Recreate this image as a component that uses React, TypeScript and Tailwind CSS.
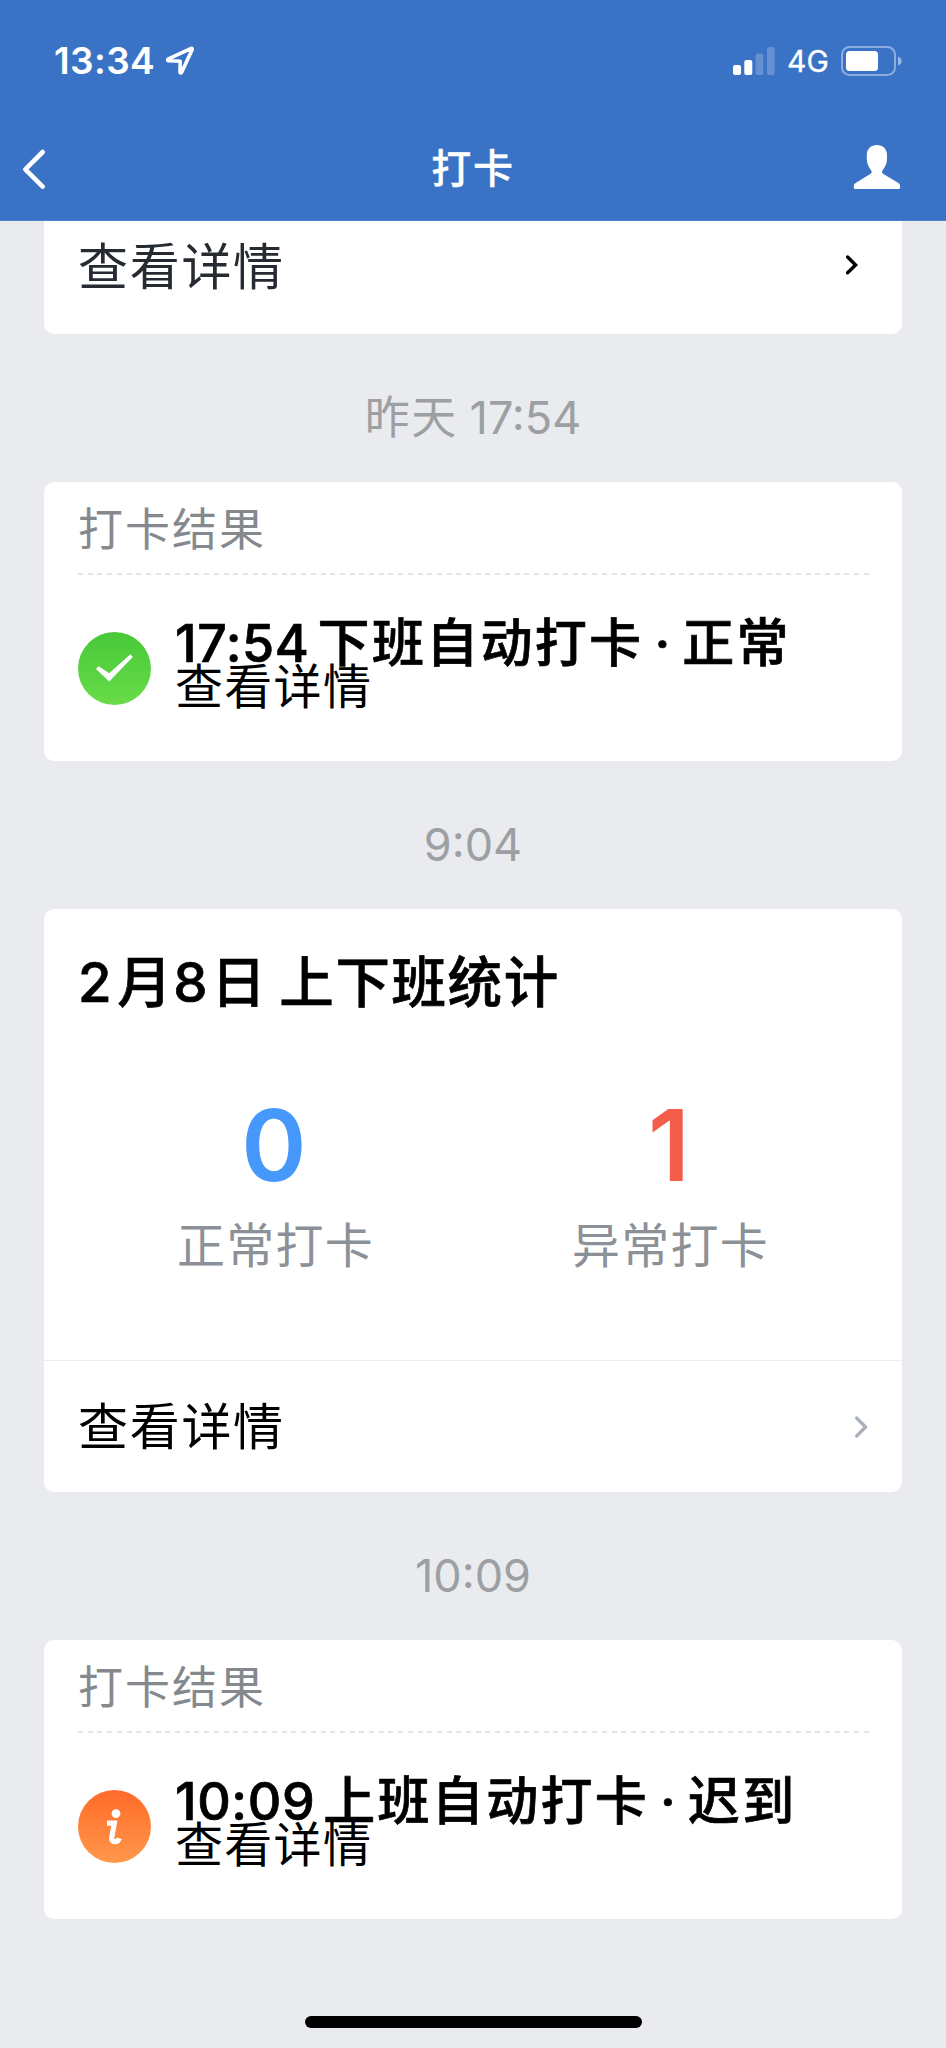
import type { ReactNode } from "react";

function StatusBar() {
  return (
    <div className="flex h-[121px] items-center pl-[54px] pr-[44px]">
      <span className="text-[37px] font-semibold leading-[40px] tracking-[0.4px]">13:34</span>
      <svg className="ml-[9px]" width="32" height="32" viewBox="0 0 32 32" fill="none">
        <path
          d="M27.2 3.4 4 14.2Q3.2 15.4 4.4 15.6L16.2 16.2 16 27.4Q16.8 28.4 17.6 27.4L28.2 4.4Q28.4 3 27.2 3.4Z"
          stroke="white"
          strokeWidth="3.6"
          strokeLinejoin="round"
        />
      </svg>
      <svg className="ml-auto" width="42" height="28" viewBox="0 0 42 28" fill="white">
        <rect x="0" y="18" width="8" height="10" rx="2" />
        <rect x="11.3" y="13" width="8" height="15" rx="2" />
        <rect x="22.6" y="6.6" width="7.6" height="21.4" rx="2" opacity="0.22" />
        <rect x="34" y="0" width="7.6" height="28" rx="2" opacity="0.22" />
      </svg>
      <span className="ml-[12px] w-[42px] text-[30px] font-normal leading-[36px] [-webkit-text-stroke:0.3px_white]">4G</span>
      <svg className="ml-[12px]" width="61" height="30" viewBox="0 0 61 30" fill="none">
        <rect x="1" y="1" width="53" height="28" rx="7.5" stroke="white" strokeOpacity="0.42" strokeWidth="2" />
        <rect x="5" y="5" width="32" height="20" rx="3.5" fill="white" />
        <path d="M57 10.5Q60.6 12 60.6 15T57 19.5Z" fill="white" fillOpacity="0.5" />
      </svg>
    </div>
  );
}

function NavBar() {
  return (
    <div className="grid h-[100px] grid-cols-[1fr_auto_1fr] items-start pl-[20px] pr-[20px]">
      <svg className="mt-[26px]" width="50" height="44" viewBox="0 0 50 44" fill="none">
        <path d="M22.7 5 5.3 22.3 22.7 39.6" stroke="white" strokeWidth="4.6" strokeLinecap="round" strokeLinejoin="round" />
      </svg>
      <h1 className="mt-[23px] text-[40px] font-medium leading-[50px] tracking-[1.8px] [-webkit-text-stroke:0.3px_white]">打卡</h1>
      <svg className="mr-[26px] mt-[23px] justify-self-end" width="50" height="46" viewBox="0 0 50 46" fill="white">
        <path d="M26.8 1C33 1 37 5 37 11V15C37 19.5 35.2 23 32.6 26.3C31.8 27.6 31.8 29 33 29.8L48 38.8C49.5 39.8 50 40.8 50 42V43.8Q50 45 48.8 45H5Q3.8 45 3.8 43.8V42C3.8 40.8 4.5 39.8 6 38.8L20.6 29.8C22 29 22 27.6 21 26.3C18.6 23 16.8 19.5 16.8 15V11C16.8 5 20.8 1 26.8 1Z" />
      </svg>
    </div>
  );
}

function Timestamp({ day, time }: { day?: string; time: string }) {
  return (
    <div className="flex h-[148px] justify-center gap-[12px] pt-[19px] text-[45px] leading-[130px] text-[#9da0a3]">
      {day && <span className="tracking-[1.4px]">{day}</span>}
      <span>{time}</span>
    </div>
  );
}

function CheckIcon() {
  return (
    <svg width="73" height="73" viewBox="0 0 73 73">
      <defs>
        <linearGradient id="green" x1="0" y1="0" x2="0" y2="1">
          <stop offset="0" stopColor="#48c839" />
          <stop offset="1" stopColor="#68dc48" />
        </linearGradient>
      </defs>
      <circle cx="36.5" cy="36.5" r="36.5" fill="url(#green)" />
      <path d="M18 37 20.6 34.2 31.2 41.2 52.4 22.2 54.8 25 31.2 49.6Z" fill="white" />
    </svg>
  );
}

function InfoIcon() {
  return (
    <svg width="73" height="73" viewBox="0 0 73 73" fill="none">
      <defs>
        <linearGradient id="orange" x1="0" y1="0" x2="0" y2="1">
          <stop offset="0" stopColor="#ff6a2a" />
          <stop offset="1" stopColor="#ff984a" />
        </linearGradient>
      </defs>
      <circle cx="36.5" cy="36.5" r="36.5" fill="url(#orange)" />
      <circle cx="38" cy="23.6" r="4.4" fill="white" />
      <path d="M29 33.2H36.4L33.8 47Q33.2 51.6 37 51.6Q40.2 51.6 41.2 48.2" stroke="white" strokeWidth="5.2" />
    </svg>
  );
}

function ResultCard({ icon, time, title, status }: { icon: ReactNode; time: string; title: string; status: string }) {
  return (
    <section className="mx-[44px] h-[279px] shrink-0 rounded-[10px] bg-white px-[34px]">
      <div className="h-[91px] pt-[5px] text-[45px] leading-[86px] tracking-[2px] text-[#85898e]">打卡结果</div>
      <div className="h-[2px] w-[791px] bg-[repeating-linear-gradient(90deg,#e4e4e4_0_5px,transparent_5px_9.7px)]" />
      <div className="flex">
        <div className="mt-[57px] shrink-0">{icon}</div>
        <div className="ml-[24px] mt-[47px] whitespace-nowrap text-black">
          <div className="flex text-[52px] font-medium leading-[44px] [-webkit-text-stroke:0.7px_black]">
            <span className="tracking-[0.6px]">{time}</span>
            <span className="ml-[8px] tracking-[2.3px]">{title}</span>
            <span className="ml-[11px] mr-[12px]">·</span>
            <span className="tracking-[2.3px]">{status}</span>
          </div>
          <div className="text-[48px] leading-[42px] tracking-[1.3px]">查看详情</div>
        </div>
      </div>
    </section>
  );
}

function Stat({ value, label, color }: { value: string; label: string; color: string }) {
  return (
    <div className="w-[395px] text-center">
      <div className={`pr-[3px] text-[99px] font-semibold leading-[120px] ${color}`}>{value}</div>
      <div className="mt-[11px] text-[48px] leading-[60px] tracking-[1.2px] text-[#8c9198]">{label}</div>
    </div>
  );
}

function SummaryCard() {
  return (
    <section className="mx-[44px] h-[583px] shrink-0 rounded-[10px] bg-white">
      <div className="h-[452px] border-b border-[#ededee] px-[34px] pt-[43px]">
        <h2 className="flex whitespace-nowrap text-[54.5px] font-medium leading-[60px] tracking-[1.6px] text-black [-webkit-text-stroke:0.7px_black]">
          <span>2</span>
          <span className="ml-[4px]">月</span>
          <span>8</span>
          <span className="ml-[2px]">日</span>
          <span className="ml-[12px]">上下班统计</span>
        </h2>
        <div className="mt-[73px] flex">
          <Stat value="0" label="正常打卡" color="text-[#4699fb]" />
          <Stat value="1" label="异常打卡" color="text-[#f55d4b]" />
        </div>
      </div>
      <div className="flex h-[131px] items-center justify-between pl-[34px] pr-[33px]">
        <span className="text-[50px] leading-[60px] tracking-[1.7px] text-black">查看详情</span>
        <svg width="16" height="24" viewBox="0 0 16 24" fill="none">
          <path d="M3.6 3 12.6 12 3.6 21" stroke="#a7afb9" strokeWidth="3.2" strokeLinecap="round" strokeLinejoin="round" />
        </svg>
      </div>
    </section>
  );
}

export default function App() {
  return (
    <div className="flex h-[2048px] w-[946px] flex-col overflow-hidden bg-[#eaebef] font-['Inter','Noto_Sans_CJK_SC',sans-serif]">
      <header className="h-[221px] shrink-0 border-b border-[#4a80cc] bg-[#3a73c6] text-white">
        <StatusBar />
        <NavBar />
      </header>
      <section className="mx-[44px] flex h-[113px] shrink-0 items-start justify-between rounded-b-[10px] bg-white pl-[34px] pr-[43px]">
        <span className="text-[50px] leading-[93px] tracking-[1.7px] text-[#262b31]">查看详情</span>
        <svg className="mt-[33px]" width="16" height="22" viewBox="0 0 16 22" fill="none">
          <path d="M4.6 3 12.6 11 4.6 18.8" stroke="black" strokeWidth="3.4" strokeLinecap="round" />
        </svg>
      </section>
      <Timestamp day="昨天" time="17:54" />
      <ResultCard icon={<CheckIcon />} time="17:54" title="下班自动打卡" status="正常" />
      <Timestamp time="9:04" />
      <SummaryCard />
      <Timestamp time="10:09" />
      <ResultCard icon={<InfoIcon />} time="10:09" title="上班自动打卡" status="迟到" />
      <div className="mx-auto mt-[97px] h-[12px] w-[337px] shrink-0 rounded-full bg-black" />
    </div>
  );
}
